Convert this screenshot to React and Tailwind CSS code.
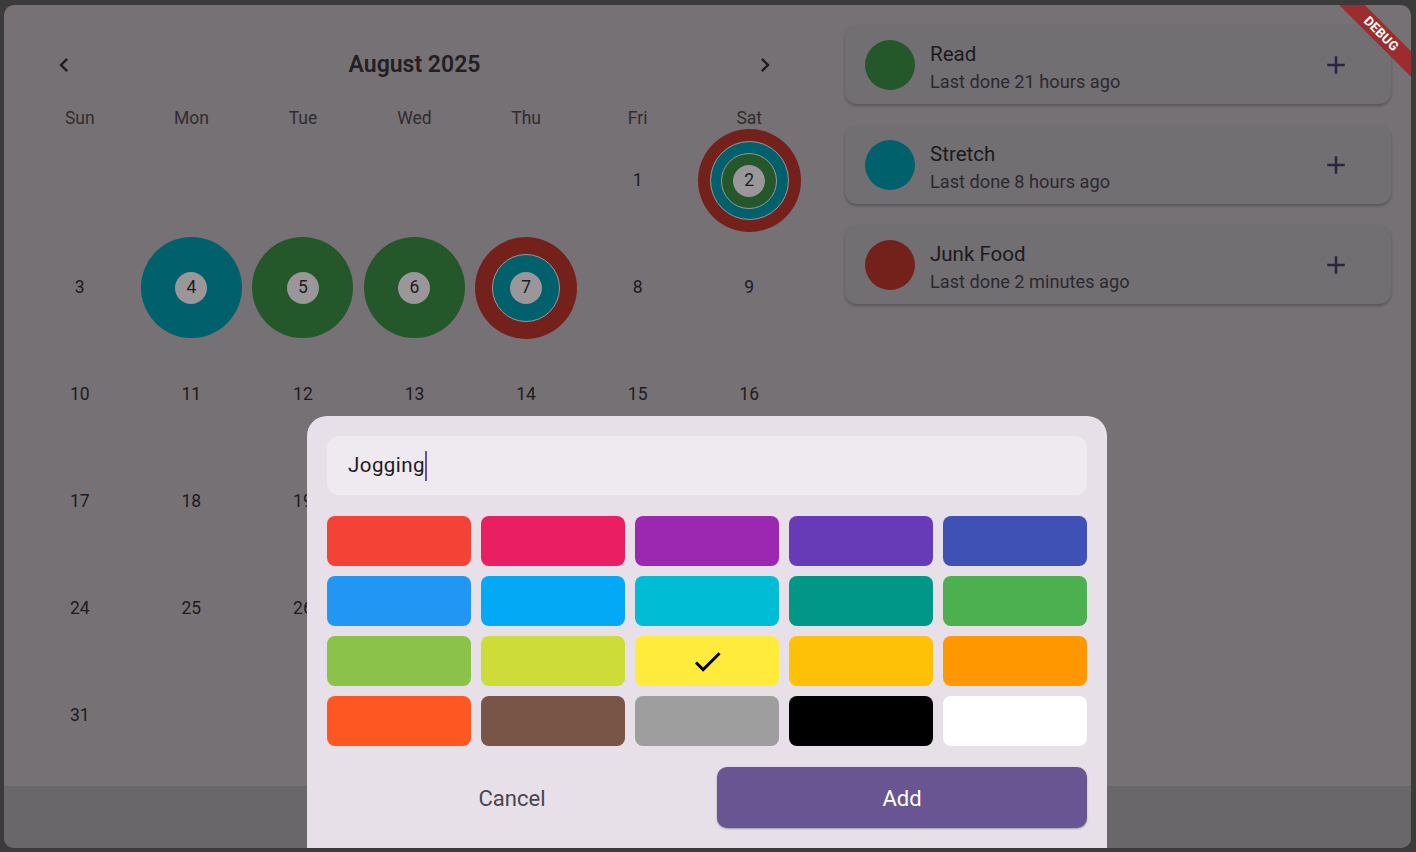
import { useState } from 'react';

const TEAL = '#00606c';
const GREEN = '#24572a';
const RED = '#75211b';
const CORE = '#9a969a';

const days = ['Sun', 'Mon', 'Tue', 'Wed', 'Thu', 'Fri', 'Sat'];

// rings: outer -> inner, each [diameter, colour]
const marks = {
  2: [[103, RED], [79, TEAL], [56, GREEN]],
  4: [[101, TEAL]],
  5: [[101, GREEN]],
  6: [[101, GREEN]],
  7: [[102, RED], [68, TEAL]],
};

const habits = [
  { name: 'Read', last: 'Last done 21 hours ago', color: GREEN },
  { name: 'Stretch', last: 'Last done 8 hours ago', color: TEAL },
  { name: 'Junk Food', last: 'Last done 2 minutes ago', color: RED },
];

const palette = [
  '#f44336', '#e91e63', '#9c27b0', '#673ab7', '#3f51b5',
  '#2196f3', '#03a9f4', '#00bcd4', '#009688', '#4caf50',
  '#8bc34a', '#cddc39', '#ffeb3b', '#ffc107', '#ff9800',
  '#ff5722', '#795548', '#9e9e9e', '#000000', '#ffffff',
];

const ChevronLeft = () => (
  <svg width="28" height="28" viewBox="0 0 24 24" fill="#1f1b1e">
    <path d="M15.41 7.41L14 6l-6 6 6 6 1.41-1.41L10.83 12z" />
  </svg>
);

const ChevronRight = () => (
  <svg width="28" height="28" viewBox="0 0 24 24" fill="#1f1b1e">
    <path d="M10 6L8.59 7.41 13.17 12l-4.58 4.59L10 18l6-6z" />
  </svg>
);

const PlusIcon = () => (
  <svg width="30" height="30" viewBox="0 0 24 24" fill="#2c2541">
    <path d="M19 13h-6v6h-2v-6H5v-2h6V5h2v6h6v2z" />
  </svg>
);

const CheckIcon = () => (
  <svg width="35" height="35" viewBox="0 0 24 24" fill="#000">
    <path d="M9 16.17L4.83 12l-1.42 1.41L9 19 21 7l-1.41-1.41z" />
  </svg>
);

const DayMark = ({ day }) => {
  const rings = marks[day];
  const label = <span className="text-[17.5px] text-[#1e1b1e]">{day}</span>;
  if (!rings) return label;

  let inner = (
    <div
      className="rounded-full flex items-center justify-center"
      style={{ width: 32, height: 32, background: CORE }}
    >
      {label}
    </div>
  );
  for (let i = rings.length - 1; i >= 0; i--) {
    const [size, color] = rings[i];
    inner = (
      <div
        className="rounded-full flex items-center justify-center"
        style={{
          width: size,
          height: size,
          background: color,
          border: i > 0 ? `1px solid ${CORE}` : 'none',
        }}
      >
        {inner}
      </div>
    );
  }
  return inner;
};

const Calendar = () => {
  const cells = [...Array(5).fill(null), ...Array.from({ length: 31 }, (_, i) => i + 1)];
  while (cells.length < 42) cells.push(null);

  return (
    <div className="w-[781px] flex flex-col">
      <div className="h-[80px] flex items-center justify-between px-4">
        <button className="w-12 h-12 flex items-center justify-center">
          <ChevronLeft />
        </button>
        <span className="text-[23px] font-semibold text-[#231f23]">August 2025</span>
        <button className="w-12 h-12 flex items-center justify-center">
          <ChevronRight />
        </button>
      </div>
      <div className="grid grid-cols-7 h-[22px] items-center">
        {days.map((d) => (
          <span key={d} className="text-center text-[17.5px] text-[#302c30]">{d}</span>
        ))}
      </div>
      <div className="grid grid-cols-7 auto-rows-[107px]">
        {cells.map((d, i) => (
          <div key={i} className="flex items-center justify-center">
            {d && <DayMark day={d} />}
          </div>
        ))}
      </div>
    </div>
  );
};

const HabitCard = ({ habit }) => (
  <div className="h-[79px] rounded-[12px] bg-[#726f73] shadow-[0_2px_3px_rgba(0,0,0,0.25)] flex items-center pl-5 pr-[31px]">
    <div className="w-[50px] h-[50px] rounded-full" style={{ background: habit.color }} />
    <div className="ml-[15px] pt-[6px] flex-1 flex flex-col">
      <span className="text-[20.5px] leading-[28px] text-[#1c1a1d]">{habit.name}</span>
      <span className="text-[18.2px] leading-[28px] text-[#2c292e]">{habit.last}</span>
    </div>
    <button className="w-12 h-12 flex items-center justify-center">
      <PlusIcon />
    </button>
  </div>
);

const AddHabitDialog = () => {
  const [selected, setSelected] = useState(12);
  return (
    <div className="absolute left-[303px] bottom-0 w-[800px] h-[432px] rounded-t-[20px] bg-[#e7e0e8] p-5 flex flex-col">
      <div className="h-[59px] rounded-[12px] bg-[#efe9f0] flex items-center pl-[21px] pr-5">
        <span className="text-[20.5px] text-[#1d1b20] tracking-[0.45px]">Jogging</span>
        <span className="w-[2px] h-[30px] bg-[#6750a4]" />
      </div>
      <div className="mt-[21px] grid grid-cols-5 gap-[10px]">
        {palette.map((c, i) => (
          <button
            key={c}
            onClick={() => setSelected(i)}
            className="h-[50px] rounded-[8px] flex items-center justify-center"
            style={{ background: c }}
          >
            {selected === i && <CheckIcon />}
          </button>
        ))}
      </div>
      <div className="mt-[21px] grid grid-cols-2 gap-5">
        <button className="h-[61px] pt-[2px] text-[22px] text-[#49454f]">Cancel</button>
        <button className="h-[61px] pt-[2px] rounded-[10px] bg-[#6a5593] text-[22px] text-white shadow-[0_1px_2px_rgba(0,0,0,0.3)]">
          Add
        </button>
      </div>
    </div>
  );
};

export default function App() {
  return (
    <div className="w-full h-[852px] bg-[#3b3b3b] pt-[5px] pl-[4px]" style={{ fontFamily: 'Roboto, "Noto Sans", sans-serif' }}>
      <div className="relative w-[1407px] h-[843px] rounded-[10px] overflow-hidden bg-[#767174] flex flex-col">
        <div className="flex-1 flex gap-10 px-5 pt-5">
          <Calendar />
          <div className="flex-1 flex flex-col gap-[21px]">
            {habits.map((h) => (
              <HabitCard key={h.name} habit={h} />
            ))}
          </div>
        </div>
        <div className="h-[62px] bg-[#6a676a]" />

        <AddHabitDialog />

        <div className="absolute left-[1277px] top-[20px] w-[200px] h-[18px] rotate-45 bg-[#9c2c2d] flex items-center justify-center">
          <span className="text-[13px] font-bold text-white tracking-[0.3px]">DEBUG</span>
        </div>
      </div>
    </div>
  );
}
